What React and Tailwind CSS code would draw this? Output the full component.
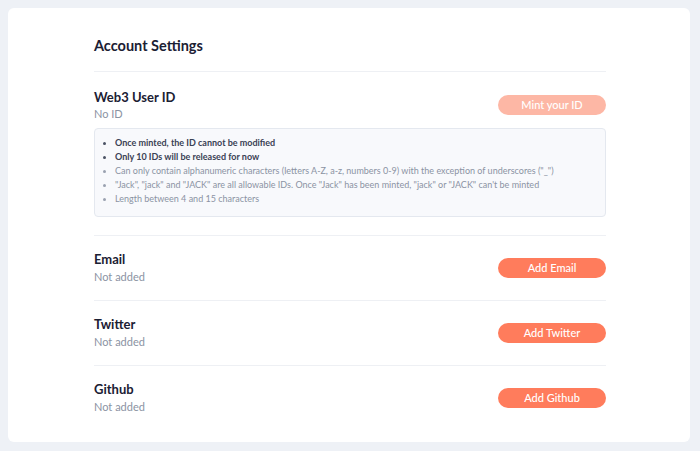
const rules = [
  { text: "Once minted, the ID cannot be modified", strong: true },
  { text: "Only 10 IDs will be released for now", strong: true },
  { text: "Can only contain alphanumeric characters (letters A-Z, a-z, numbers 0-9) with the exception of underscores (\"_\")" },
  { text: "\"Jack\", \"jack\" and \"JACK\" are all allowable IDs. Once \"Jack\" has been minted, \"jack\" or \"JACK\" can't be minted" },
  { text: "Length between 4 and 15 characters" },
];

function ActionButton({ children, disabled }) {
  return (
    <button
      className={
        "h-5 w-[108px] rounded-full text-[11px] font-medium leading-5 text-white " +
        (disabled ? "bg-[#fdb7a5]" : "bg-[#ff7c5c]")
      }
    >
      {children}
    </button>
  );
}

function Row({ title, subtitle, action, last }) {
  return (
    <div className={"flex items-center justify-between pt-[14px] " + (last ? "pb-[27px]" : "border-b border-[#eef0f4] pb-[15px]")}>
      <div>
        <p className="text-[13px] font-bold leading-[18px] text-[#1b2033]">{title}</p>
        <p className="mt-[1px] text-[11px] leading-4 text-[#8b93a3]">{subtitle}</p>
      </div>
      <ActionButton>{action}</ActionButton>
    </div>
  );
}

export default function App() {
  return (
    <div className="min-h-[451px] bg-[#eef1f6] pl-2 pt-2" style={{ fontFamily: "Lato, 'Noto Sans', sans-serif" }}>
      <div className="w-[682px] rounded-md bg-white pl-[86px] pt-7">
        <div className="w-[512px]">
          <h1 className="border-b border-[#eef0f4] pb-[15px] text-[14.5px] font-bold leading-5 text-[#1b2033]">
            Account Settings
          </h1>

          <div className="border-b border-[#eef0f4] pt-[16px] pb-[18px]">
            <div className="flex items-center justify-between">
              <div>
                <p className="text-[13px] font-bold leading-[18px] text-[#1b2033]">Web3 User ID</p>
                <p className="text-[11px] leading-4 text-[#8b93a3]">No ID</p>
              </div>
              <ActionButton disabled>Mint your ID</ActionButton>
            </div>
            <ul className="mt-[6px] rounded border border-[#e4e8ef] bg-[#f8f9fc] px-2 pt-[7px] pb-[10px]">
              {rules.map((r) => (
                <li key={r.text} className="flex items-center gap-[9px] text-[9px] leading-[14px]">
                  <span className={"h-[3px] w-[3px] rounded-full " + (r.strong ? "bg-[#4a5163]" : "bg-[#9aa1b0]")} />
                  <span className={r.strong ? "font-bold text-[#3a4154]" : "text-[#8b93a3]"}>{r.text}</span>
                </li>
              ))}
            </ul>
          </div>

          <Row title="Email" subtitle="Not added" action="Add Email" />
          <Row title="Twitter" subtitle="Not added" action="Add Twitter" />
          <Row title="Github" subtitle="Not added" action="Add Github" last />
        </div>
      </div>
    </div>
  );
}
